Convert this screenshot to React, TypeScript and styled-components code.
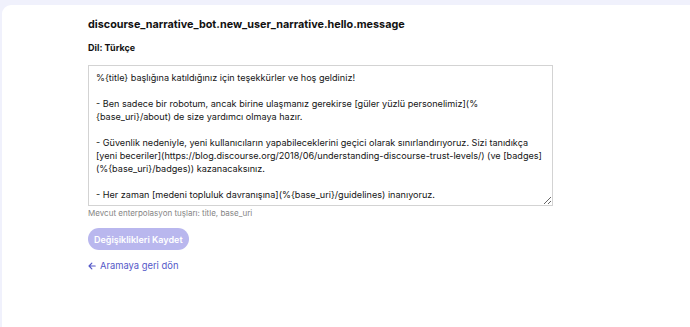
import React from 'react';
import styled, { createGlobalStyle } from 'styled-components';

const GlobalStyle = createGlobalStyle`
  html, body {
    margin: 0;
    padding: 0;
    background: #f0f1fc;
    font-family: Inter, "Noto Sans", sans-serif;
    color: #1f1f1f;
  }
`;

const Page = styled.div`
  padding: 5px 0 0 2px;
  height: 327px;
  box-sizing: border-box;
  overflow: hidden;
`;

const Card = styled.div`
  background: #fff;
  border-top-left-radius: 9px;
  height: 100%;
  padding: 13px 0 0 86px;
  box-sizing: border-box;
`;

const Title = styled.h1`
  margin: 0;
  font-size: 10.8px;
  font-weight: 700;
  line-height: 14px;
  color: #111;
`;

const Language = styled.div`
  margin-top: 10px;
  font-size: 9px;
  font-weight: 700;
  line-height: 12px;
  color: #111;
`;

const Editor = styled.textarea`
  display: block;
  margin-top: 11px;
  width: 465px;
  height: 141px;
  box-sizing: border-box;
  padding: 5px 7px;
  border: 1px solid #d3d3d3;
  border-radius: 0;
  font-family: Inter, "Noto Sans", sans-serif;
  font-size: 9.1px;
  line-height: 13px;
  color: #151515;
  resize: vertical;
  overflow: hidden;
  outline: none;
`;

const Hint = styled.div`
  margin-top: 2px;
  font-size: 8px;
  line-height: 11px;
  color: #858585;
`;

const SaveButton = styled.button`
  display: block;
  margin-top: 9px;
  height: 22px;
  padding: 0 6px;
  border: none;
  border-radius: 11px;
  background: #b9b7ee;
  color: #fff;
  font-family: Inter, "Noto Sans", sans-serif;
  font-size: 9px;
  font-weight: 600;
`;

const BackLink = styled.a`
  display: flex;
  width: fit-content;
  align-items: center;
  gap: 4px;
  margin-top: 10px;
  font-size: 9.4px;
  line-height: 12px;
  color: #5458c8;
  text-decoration: none;
`;

const message = `%{title} başlığına katıldığınız için teşekkürler ve hoş geldiniz!

- Ben sadece bir robotum, ancak birine ulaşmanız gerekirse [güler yüzlü personelimiz](%{base_uri}/about) de size yardımcı olmaya hazır.

- Güvenlik nedeniyle, yeni kullanıcıların yapabileceklerini geçici olarak sınırlandırıyoruz. Sizi tanıdıkça [yeni beceriler](https://blog.discourse.org/2018/06/understanding-discourse-trust-levels/) (ve [badges](%{base_uri}/badges)) kazanacaksınız.

- Her zaman [medeni topluluk davranışına](%{base_uri}/guidelines) inanıyoruz.

Bizimle sohbet etmek isterseniz bana bir mesaj gönderin.`;

export default function App() {
  return (
    <Page>
      <GlobalStyle />
      <Card>
        <Title>discourse_narrative_bot.new_user_narrative.hello.message</Title>
        <Language>Dil: Türkçe</Language>
        <Editor defaultValue={message} spellCheck={false} />
        <Hint>Mevcut enterpolasyon tuşları: title, base_uri</Hint>
        <SaveButton disabled>Değişiklikleri Kaydet</SaveButton>
        <BackLink href="#">
          <svg width="8" height="8" viewBox="0 0 10 10" fill="none" stroke="currentColor" strokeWidth="1.5" strokeLinecap="round" strokeLinejoin="round">
            <path d="M9 5H1.5M4.8 1.5L1.3 5l3.5 3.5" />
          </svg>
          Aramaya geri dön
        </BackLink>
      </Card>
    </Page>
  );
}
